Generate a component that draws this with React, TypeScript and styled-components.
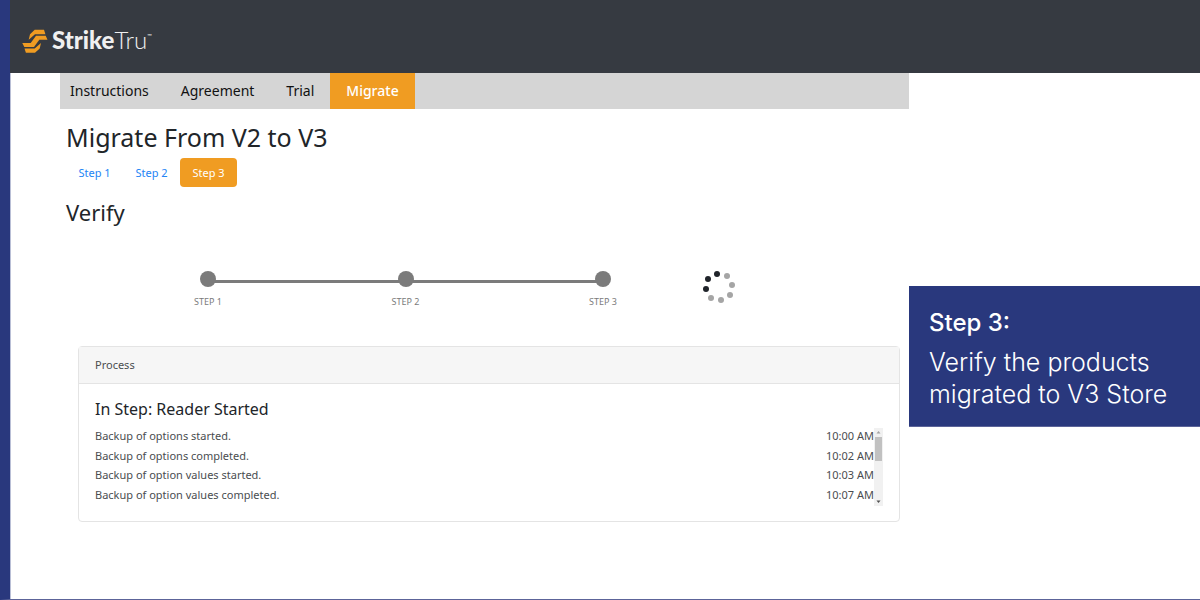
import React from "react";
import styled, { createGlobalStyle } from "styled-components";

const GlobalStyle = createGlobalStyle`
  *, *::before, *::after { box-sizing: border-box; }
  body {
    margin: 0;
    background: #fff;
    color: #212529;
    font-family: "Noto Sans", sans-serif;
    font-size: 11px;
  }
  h1, h2, h3, p, ol, ul { margin: 0; padding: 0; font-weight: 400; }
`;

const Page = styled.div`
  display: flex;
  flex-direction: column;
  min-height: 100vh;
  border-left: 10px solid #29387d;
  border-bottom: 1px solid #5c6499;
`;

const Header = styled.header`
  display: flex;
  align-items: center;
  height: 73px;
  padding: 8px 12px 0;
  background: #363a41;
`;

const Brand = styled.a`
  display: flex;
  align-items: center;
  gap: 4px;
  color: #f0f0f0;
  font-family: Lato, sans-serif;
  font-size: 24px;
  line-height: 26px;
  text-decoration: none;
`;

const BrandName = styled.span`
  display: flex;
  padding-bottom: 2px;
`;

const Strong = styled.strong`
  font-weight: 900;
`;

const Light = styled.span`
  font-weight: 300;
`;

const Mark = styled.span`
  font-size: 6px;
  line-height: 18px;
`;

const Columns = styled.div`
  display: grid;
  grid-template-columns: minmax(0, 1fr) 291px;
  flex: 1;
  padding-left: 49px;
  border-left: 1px solid #b9bfd6;
`;

const Tabs = styled.nav`
  display: flex;
  height: 36px;
  background: #d5d5d5;
`;

const Tab = styled.a<{ $active?: boolean }>`
  padding: 0 16px;
  background: ${(p) => (p.$active ? "#f09c22" : "transparent")};
  color: ${(p) => (p.$active ? "#fff" : "#111")};
  font-size: 14px;
  font-weight: ${(p) => (p.$active ? 500 : 400)};
  line-height: 36px;
  text-decoration: none;

  &:first-child { padding-left: 10px; }
`;

const Intro = styled.div`
  padding: 12px 6px 0;
`;

const Title = styled.h1`
  font-size: 25px;
  line-height: 32px;
`;

const Pills = styled.div`
  display: flex;
  margin: 5px 0 10px;
`;

const Pill = styled.button<{ $active?: boolean }>`
  width: 57px;
  height: 29px;
  padding: 0;
  border: 0;
  border-radius: 4px;
  background: ${(p) => (p.$active ? "#f09c22" : "transparent")};
  color: ${(p) => (p.$active ? "#fff" : "#2484f5")};
  font: inherit;
`;

const Subtitle = styled.h2`
  font-size: 22px;
  line-height: 30px;
`;

const Progress = styled.div`
  display: flex;
  justify-content: space-between;
  padding: 41px 171px 37px 130px;
`;

const Steps = styled.ol`
  display: flex;
  justify-content: space-between;
  width: 431px;
  padding: 3px 0 0;
  list-style: none;
  background: linear-gradient(#7b7b7b, #7b7b7b) 18px 12px / 395px 3px no-repeat;
`;

const Step = styled.li`
  display: flex;
  flex-direction: column;
  align-items: center;
  gap: 8px;
  width: 36px;
  color: #7b7b7b;
  font-size: 9px;
  line-height: 14px;
  white-space: nowrap;

  &::before {
    content: "";
    width: 16px;
    height: 16px;
    border-radius: 50%;
    background: #7b7b7b;
  }
`;

const Card = styled.section`
  margin: 0 9px 0 18px;
  border: 1px solid #e4e4e4;
  border-radius: 4px;
`;

const CardHeader = styled.div`
  height: 37px;
  padding: 0 16px;
  border-bottom: 1px solid #e4e4e4;
  background: #f6f6f6;
  color: #4a4d50;
  line-height: 35px;
`;

const CardBody = styled.div`
  padding: 15px 16px;
`;

const CardTitle = styled.h3`
  font-size: 16px;
  line-height: 20px;
`;

const LogArea = styled.div`
  display: flex;
  height: 78px;
  margin-top: 9px;
`;

const Log = styled.table`
  flex: 1;
  height: 78px;
  border-collapse: collapse;
  color: #4a4d50;
  line-height: 16px;

  td { padding: 0 0 3px; }
  td:last-child { text-align: right; }
`;

const Scrollbar = styled.div`
  display: flex;
  flex-direction: column;
  align-items: center;
  width: 9px;
  background: #f1f1f1;
`;

const Thumb = styled.div`
  width: 7px;
  height: 24px;
  margin-bottom: auto;
  background: #c1c1c1;
`;

const Arrow = styled.svg`
  display: block;
  width: 9px;
  height: 9px;
`;

const Callout = styled.aside`
  align-self: start;
  margin-top: 213px;
  padding: 21px 20px 16px;
  border-bottom: 1px solid #5c6499;
  background: #29387d;
  color: #fff;
  font-family: Inter, sans-serif;
  font-size: 25px;
  font-weight: 300;
  line-height: 32px;

  p { font-weight: inherit; }
`;

const CalloutTitle = styled.h2`
  margin-bottom: 7px;
  font-size: 24px;
  font-weight: 500;
`;

const entries = [
  ["Backup of options started.", "10:00 AM"],
  ["Backup of options completed.", "10:02 AM"],
  ["Backup of option values started.", "10:03 AM"],
  ["Backup of option values completed.", "10:07 AM"],
];

const spinnerDots = [
  [17, 6, true],
  [27, 8, false],
  [32, 17, false],
  [30, 27, false],
  [21, 32, false],
  [11, 30, false],
  [6, 21, true],
  [8, 11, true],
] as const;

function Logo() {
  return (
    <svg width="26" height="24" viewBox="0 0 26 24" fill="#f09c22" aria-hidden="true">
      <path d="M12.7 .8H22L23.4 5.3H13L6.7 10.7L8 5.3Z" />
      <path d="M.3 14H8.7L14 6.7H23.7L25.5 10.7H17.3L12 18H2.3Z" />
      <path d="M13 23.8H3.9L2.5 19.4H12.7L19 14L17.7 19.4Z" />
    </svg>
  );
}

export default function App() {
  return (
    <>
      <GlobalStyle />
      <Page>
        <Header>
          <Brand href="#">
            <Logo />
            <BrandName>
              <Strong>Strike</Strong>
              <Light>Tru</Light>
              <Mark>™</Mark>
            </BrandName>
          </Brand>
        </Header>
        <Columns>
          <main>
            <Tabs>
              <Tab href="#">Instructions</Tab>
              <Tab href="#">Agreement</Tab>
              <Tab href="#">Trial</Tab>
              <Tab href="#" $active>Migrate</Tab>
            </Tabs>
            <Intro>
              <Title>Migrate From V2 to V3</Title>
              <Pills>
                <Pill>Step 1</Pill>
                <Pill>Step 2</Pill>
                <Pill $active>Step 3</Pill>
              </Pills>
              <Subtitle>Verify</Subtitle>
            </Intro>
            <Progress>
              <Steps>
                <Step>STEP 1</Step>
                <Step>STEP 2</Step>
                <Step>STEP 3</Step>
              </Steps>
              <svg width="38" height="37" viewBox="0 0 38 37" role="img" aria-label="Loading">
                {spinnerDots.map(([x, y, dark]) => (
                  <circle key={`${x}-${y}`} cx={x} cy={y} r="3" fill={dark ? "#20242a" : "#a5a5a5"} />
                ))}
              </svg>
            </Progress>
            <Card>
              <CardHeader>Process</CardHeader>
              <CardBody>
                <CardTitle>In Step: Reader Started</CardTitle>
                <LogArea>
                  <Log>
                    <tbody>
                      {entries.map(([text, time]) => (
                        <tr key={text}>
                          <td>{text}</td>
                          <td>{time}</td>
                        </tr>
                      ))}
                    </tbody>
                  </Log>
                  <Scrollbar aria-hidden="true">
                    <Arrow viewBox="0 0 9 9"><path d="M2.5 5.5L4.5 3L6.5 5.5Z" fill="#a3a3a3" /></Arrow>
                    <Thumb />
                    <Arrow viewBox="0 0 9 9"><path d="M2.5 3.5L4.5 6L6.5 3.5Z" fill="#505050" /></Arrow>
                  </Scrollbar>
                </LogArea>
              </CardBody>
            </Card>
          </main>
          <Callout>
            <CalloutTitle>Step 3:</CalloutTitle>
            <p>Verify the products migrated to V3 Store</p>
          </Callout>
        </Columns>
      </Page>
    </>
  );
}
